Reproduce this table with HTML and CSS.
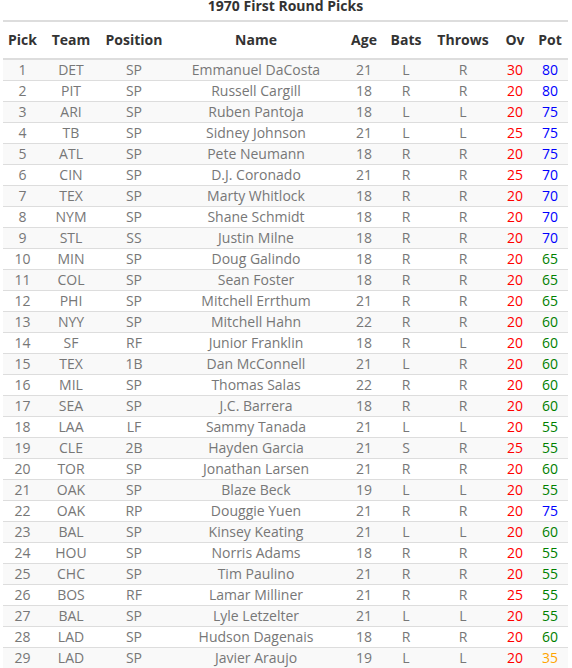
FILE: index.html
```html
<!DOCTYPE html>
<html>
<head>
<meta charset="utf-8">
<link rel="stylesheet" href="styles.css">
</head>
<body>
<div class="wrap">
<table class="picks">
<caption>1970 First Round Picks</caption>
<colgroup>
<col class="c-pick"><col class="c-team"><col class="c-pos"><col class="c-name"><col class="c-age"><col class="c-bats"><col class="c-throws"><col class="c-ov"><col class="c-pot">
</colgroup>
<thead>
<tr><th>Pick</th><th>Team</th><th>Position</th><th>Name</th><th>Age</th><th>Bats</th><th>Throws</th><th>Ov</th><th>Pot</th></tr>
</thead>
<tbody>
<tr><td>1</td><td>DET</td><td>SP</td><td>Emmanuel DaCosta</td><td>21</td><td>L</td><td>R</td><td class="red">30</td><td class="blue">80</td></tr>
<tr><td>2</td><td>PIT</td><td>SP</td><td>Russell Cargill</td><td>18</td><td>R</td><td>R</td><td class="red">20</td><td class="blue">80</td></tr>
<tr><td>3</td><td>ARI</td><td>SP</td><td>Ruben Pantoja</td><td>18</td><td>L</td><td>L</td><td class="red">20</td><td class="blue">75</td></tr>
<tr><td>4</td><td>TB</td><td>SP</td><td>Sidney Johnson</td><td>21</td><td>L</td><td>L</td><td class="red">25</td><td class="blue">75</td></tr>
<tr><td>5</td><td>ATL</td><td>SP</td><td>Pete Neumann</td><td>18</td><td>R</td><td>R</td><td class="red">20</td><td class="blue">75</td></tr>
<tr><td>6</td><td>CIN</td><td>SP</td><td>D.J. Coronado</td><td>21</td><td>R</td><td>R</td><td class="red">25</td><td class="blue">70</td></tr>
<tr><td>7</td><td>TEX</td><td>SP</td><td>Marty Whitlock</td><td>18</td><td>R</td><td>R</td><td class="red">20</td><td class="blue">70</td></tr>
<tr><td>8</td><td>NYM</td><td>SP</td><td>Shane Schmidt</td><td>18</td><td>R</td><td>R</td><td class="red">20</td><td class="blue">70</td></tr>
<tr><td>9</td><td>STL</td><td>SS</td><td>Justin Milne</td><td>18</td><td>R</td><td>R</td><td class="red">20</td><td class="blue">70</td></tr>
<tr><td>10</td><td>MIN</td><td>SP</td><td>Doug Galindo</td><td>18</td><td>R</td><td>R</td><td class="red">20</td><td class="green">65</td></tr>
<tr><td>11</td><td>COL</td><td>SP</td><td>Sean Foster</td><td>18</td><td>R</td><td>R</td><td class="red">20</td><td class="green">65</td></tr>
<tr><td>12</td><td>PHI</td><td>SP</td><td>Mitchell Errthum</td><td>21</td><td>R</td><td>R</td><td class="red">20</td><td class="green">65</td></tr>
<tr><td>13</td><td>NYY</td><td>SP</td><td>Mitchell Hahn</td><td>22</td><td>R</td><td>R</td><td class="red">20</td><td class="green">60</td></tr>
<tr><td>14</td><td>SF</td><td>RF</td><td>Junior Franklin</td><td>18</td><td>R</td><td>L</td><td class="red">20</td><td class="green">60</td></tr>
<tr><td>15</td><td>TEX</td><td>1B</td><td>Dan McConnell</td><td>21</td><td>L</td><td>R</td><td class="red">20</td><td class="green">60</td></tr>
<tr><td>16</td><td>MIL</td><td>SP</td><td>Thomas Salas</td><td>22</td><td>R</td><td>R</td><td class="red">20</td><td class="green">60</td></tr>
<tr><td>17</td><td>SEA</td><td>SP</td><td>J.C. Barrera</td><td>18</td><td>R</td><td>R</td><td class="red">20</td><td class="green">60</td></tr>
<tr><td>18</td><td>LAA</td><td>LF</td><td>Sammy Tanada</td><td>21</td><td>L</td><td>L</td><td class="red">20</td><td class="green">55</td></tr>
<tr><td>19</td><td>CLE</td><td>2B</td><td>Hayden Garcia</td><td>21</td><td>S</td><td>R</td><td class="red">25</td><td class="green">55</td></tr>
<tr><td>20</td><td>TOR</td><td>SP</td><td>Jonathan Larsen</td><td>21</td><td>R</td><td>R</td><td class="red">20</td><td class="green">60</td></tr>
<tr><td>21</td><td>OAK</td><td>SP</td><td>Blaze Beck</td><td>19</td><td>L</td><td>L</td><td class="red">20</td><td class="green">55</td></tr>
<tr><td>22</td><td>OAK</td><td>RP</td><td>Douggie Yuen</td><td>21</td><td>R</td><td>R</td><td class="red">20</td><td class="blue">75</td></tr>
<tr><td>23</td><td>BAL</td><td>SP</td><td>Kinsey Keating</td><td>21</td><td>L</td><td>L</td><td class="red">20</td><td class="green">60</td></tr>
<tr><td>24</td><td>HOU</td><td>SP</td><td>Norris Adams</td><td>18</td><td>R</td><td>R</td><td class="red">20</td><td class="green">55</td></tr>
<tr><td>25</td><td>CHC</td><td>SP</td><td>Tim Paulino</td><td>21</td><td>R</td><td>R</td><td class="red">20</td><td class="green">55</td></tr>
<tr><td>26</td><td>BOS</td><td>RF</td><td>Lamar Milliner</td><td>21</td><td>R</td><td>R</td><td class="red">25</td><td class="green">55</td></tr>
<tr><td>27</td><td>BAL</td><td>SP</td><td>Lyle Letzelter</td><td>21</td><td>L</td><td>L</td><td class="red">20</td><td class="green">55</td></tr>
<tr><td>28</td><td>LAD</td><td>SP</td><td>Hudson Dagenais</td><td>18</td><td>R</td><td>R</td><td class="red">20</td><td class="green">60</td></tr>
<tr><td>29</td><td>LAD</td><td>SP</td><td>Javier Araujo</td><td>19</td><td>L</td><td>L</td><td class="red">20</td><td class="orange">35</td></tr>
</tbody>
</table>
</div>
</body>
</html>
```
FILE: styles.css
```css
html, body {
  margin: 0;
  padding: 0;
  background: #fff;
}
body {
  font-family: "Open Sans", "Liberation Sans", sans-serif;
  font-size: 14px;
  color: #777;
}
.wrap {
  padding: 0 4px 0 3px;
}
.picks {
  width: 565px;
  table-layout: fixed;
  border-collapse: collapse;
  border-spacing: 0;
}
.picks caption {
  font-size: 14px;
  font-weight: bold;
  color: #333;
  line-height: 16px;
  height: 22px;
  margin-top: -2px;
  text-align: center;
}
.c-pick { width: 39px; }
.c-team { width: 58px; }
.c-pos { width: 68px; }
.c-name { width: 176px; }
.c-age { width: 40px; }
.c-bats { width: 44px; }
.c-throws { width: 70px; }
.c-ov { width: 34px; }
.c-pot { width: 36px; }
.picks th {
  font-weight: bold;
  color: #333;
  text-align: center;
  padding: 8px 0 8px;
  line-height: 20px;
  height: 20px;
  border-top: 2px solid #ddd;
  border-bottom: 2px solid #ddd;
  white-space: nowrap;
}
.picks td {
  text-align: center;
  padding: 0;
  line-height: 20px;
  height: 20px;
  border-top: 1px solid #ddd;
  white-space: nowrap;
}
.picks tbody tr:nth-child(odd) {
  background: #f9f9f9;
}
.picks tbody tr:first-child td {
  border-top: none;
}
.red { color: #f00 !important; }
.blue { color: #00f !important; }
.green { color: #008000 !important; }
.orange { color: #ffa500 !important; }
```
